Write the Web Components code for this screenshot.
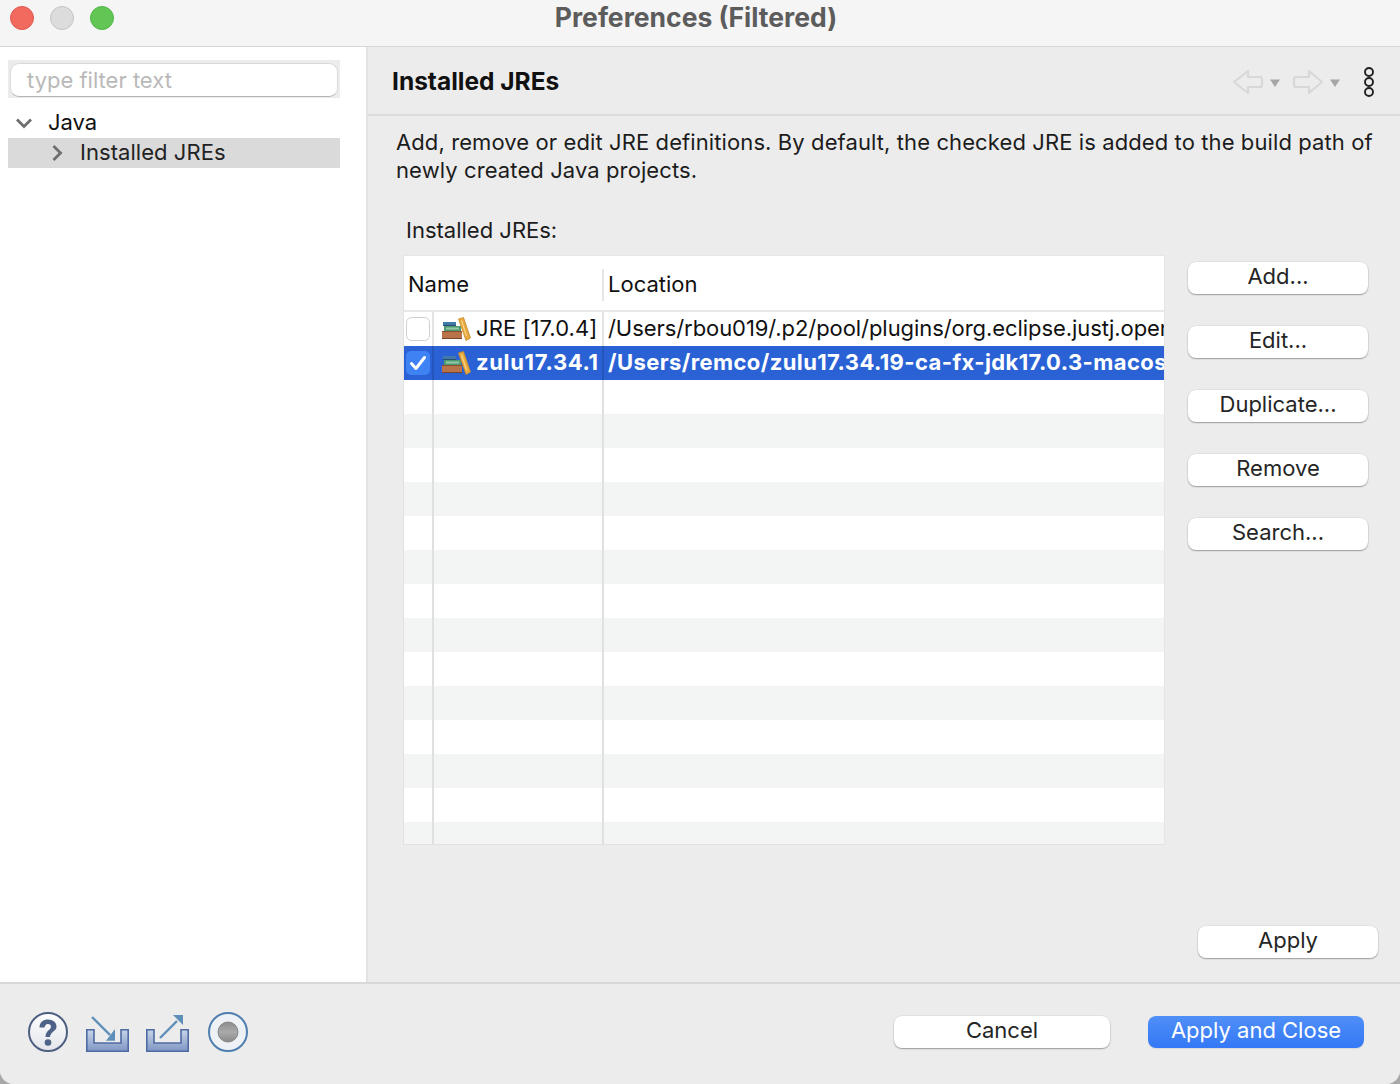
<!DOCTYPE html>
<html lang="en">
<head>
<meta charset="utf-8">
<title>Preferences (Filtered)</title>
<style>
  html, body { margin: 0; padding: 0; background: #a8a8a8; }
  body { font-family: Inter, "Liberation Sans", sans-serif; }
</style>
</head>
<body>
<pref-window>
  <pref-titlebar slot="top">Preferences (Filtered)</pref-titlebar>
  <pref-tree slot="left"></pref-tree>
  <jre-page slot="right"></jre-page>
  <pref-footer slot="bottom"></pref-footer>
</pref-window>

<script>
const FONT = 'Inter, "Liberation Sans", sans-serif';

class PrefWindow extends HTMLElement {
  constructor() {
    super();
    this.attachShadow({ mode: 'open' });
    this.shadowRoot.innerHTML = `
      <style>
        :host { display: block; width: 1400px; height: 1084px; overflow: hidden; }
        .win { height: 1084px; display: flex; flex-direction: column; background: #ececec; border-radius: 0 0 14px 14px; overflow: hidden; }
        .mid { flex: 1; display: flex; min-height: 0; }
        .left { width: 366px; background: #fff; border-right: 2px solid #e2e2e2; }
        .right { flex: 1; min-width: 0; }
      </style>
      <div class="win">
        <slot name="top"></slot>
        <div class="mid">
          <div class="left"><slot name="left"></slot></div>
          <div class="right"><slot name="right"></slot></div>
        </div>
        <slot name="bottom"></slot>
      </div>`;
  }
}

class PrefTitlebar extends HTMLElement {
  constructor() {
    super();
    this.attachShadow({ mode: 'open' });
    this.shadowRoot.innerHTML = `
      <style>
        :host { display: block; }
        .bar { height: 46px; background: #f5f5f5; border-bottom: 1px solid #d6d6d6; position: relative;
          display: flex; align-items: flex-start; justify-content: center; }
        .title { font: 700 26.5px/34px ${FONT}; color: #5c5c5c; margin-left: -8px; }
        .lights { position: absolute; left: 10px; top: 6px; display: flex; gap: 16px; }
        .lights i { display: block; width: 24px; height: 24px; border-radius: 50%; box-sizing: border-box; }
        .r { background: #f2695e; border: 1px solid #dd5a50; }
        .g { background: #dcdcdc; border: 1px solid #c4c4c4; }
        .v { background: #62c655; border: 1px solid #55b34a; }
      </style>
      <div class="bar">
        <div class="lights"><i class="r"></i><i class="g"></i><i class="v"></i></div>
        <div class="title"><slot></slot></div>
      </div>`;
  }
}

class PrefTree extends HTMLElement {
  constructor() {
    super();
    this.attachShadow({ mode: 'open' });
    this.shadowRoot.innerHTML = `
      <style>
        :host { display: block; padding: 13px 26px 0 8px; font: 22px/30px ${FONT}; color: #111; }
        .filter { height: 38px; background: #ececec; padding: 3px 2px; box-sizing: border-box; margin-bottom: 10px; }
        .input { height: 34px; box-sizing: border-box; background: #fff; border-radius: 9px; border: 1px solid #d9d9d9;
          border-bottom: 1px solid #b4b4b4; padding-left: 16px; color: #b9b9b9; font-size: 22px; line-height: 33px; }
        .row { height: 30px; display: flex; align-items: center; white-space: nowrap; }
        .row svg { flex: none; }
        .row span { margin-top: -2px; }
        .sel { background: #dadada; color: #222; }
        .java { padding-left: 7px; }
        .java span { margin-left: 15px; }
        .sel { padding-left: 43px; }
        .sel span { margin-left: 17px; letter-spacing: .05px; }
      </style>
      <div class="filter"><div class="input">type filter text</div></div>
      <div class="row java">
        <svg width="18" height="12" viewBox="0 0 18 12"><path d="M2 2.5 9 9.5 16 2.5" fill="none" stroke="#6e6e6e" stroke-width="2.8"/></svg>
        <span>Java</span>
      </div>
      <div class="row sel">
        <svg width="12" height="18" viewBox="0 0 12 18"><path d="M2.5 2 9.5 9 2.5 16" fill="none" stroke="#6e6e6e" stroke-width="2.8"/></svg>
        <span>Installed JREs</span>
      </div>`;
  }
}

class PushButton extends HTMLElement {
  constructor() {
    super();
    this.attachShadow({ mode: 'open' });
    this.shadowRoot.innerHTML = `
      <style>
        :host { display: block; width: 180px; height: 32px; box-sizing: border-box; background: #fff; border-radius: 8px;
          box-shadow: 0 0 0 0.5px rgba(0,0,0,.07), 0 1px 1.5px rgba(0,0,0,.32);
          font: 22px/29px ${FONT}; color: #252525; text-align: center; }
        :host([primary]) { background: linear-gradient(#4f8ff7, #3478f6); color: #fff; box-shadow: 0 1px 1px rgba(0,0,0,.08); }
        :host([wide]) { width: 216px; }
      </style>
      <slot></slot>`;
  }
}

const BOOKS = `
  <svg width="30" height="26" viewBox="0 0 30 26">
    <rect x="1" y="15" width="20" height="8" fill="#b9734a"/>
    <rect x="1" y="15" width="20" height="1" fill="#8a4f2d"/>
    <rect x="1" y="22" width="20" height="1" fill="#7c4526"/>
    <rect x="3" y="10" width="17" height="5" fill="#4f9a72"/>
    <rect x="5" y="11.5" width="13" height="2" fill="#93c9a5"/>
    <rect x="2" y="6" width="13" height="4" fill="#3f7aa8"/>
    <rect x="2" y="9" width="13" height="1" fill="#2b4c73"/>
    <path d="M17.5 3 22.5 1.5 29.5 22 25 24.5Z" fill="#eaa93f" stroke="#c48a2c" stroke-width=".8"/>
    <path d="M20.5 4.5 25.5 20" stroke="#f7d78b" stroke-width="1.1"/>
  </svg>`;

class JreRow extends HTMLElement {
  constructor() {
    super();
    this.attachShadow({ mode: 'open' });
  }
  connectedCallback() { this.render(); }
  render() {
    const selected = this.hasAttribute('selected');
    const check = selected
      ? `<svg width="24" height="24" viewBox="0 0 24 24"><rect x="0" y="0" width="24" height="24" rx="5" fill="#3f82f4"/><path d="M5.5 12.5 10 17.5 18.5 6.5" fill="none" stroke="#fff" stroke-width="3" stroke-linecap="round" stroke-linejoin="round"/></svg>`
      : `<svg width="24" height="24" viewBox="0 0 24 24"><rect x=".5" y=".5" width="23" height="23" rx="5" fill="#fff" stroke="#cfcfcf"/></svg>`;
    this.shadowRoot.innerHTML = `
      <style>
        :host { display: grid; grid-template-columns: 28px 2px 168px 2px 1fr; height: 34px; background: #fff; color: #111;
          font: 22px/32px ${FONT}; white-space: nowrap; }
        :host([selected]) { background: #2a62d6; color: #fff; font-weight: 700; }
        .chk { display: flex; align-items: center; padding-left: 2px; }
        .sep { background: #e4e4e4; }
        :host([selected]) .sep { background: #2556bb; }
        .name { display: flex; align-items: center; overflow: hidden; padding-left: 7px; }
        .name svg { flex: none; margin-right: 5px; }
        .name span { letter-spacing: .08px; margin-top: -2px; }
        :host([selected]) .name span { letter-spacing: .65px; }
        .loc { overflow: hidden; padding-left: 4px; letter-spacing: -.07px; }
        :host([selected]) .loc { letter-spacing: .4px; }
      </style>
      <div class="chk">${check}</div><div class="sep"></div>
      <div class="name">${BOOKS}<span>${this.getAttribute('name')}</span></div><div class="sep"></div>
      <div class="loc">${this.getAttribute('location')}</div>`;
  }
}

class JreTable extends HTMLElement {
  constructor() {
    super();
    this.attachShadow({ mode: 'open' });
    // 14 empty rows, alternating; the last one is cut off by the table's bottom edge
    const empties = [];
    for (let i = 0; i < 14; i++) empties.push(`<div class="empty ${i % 2 ? 'alt' : ''}"><b></b><s></s><b></b><s></s><b></b></div>`);
    this.shadowRoot.innerHTML = `
      <style>
        :host { display: block; width: 762px; height: 590px; box-sizing: border-box; border: 1px solid #e2e2e2; border-top-color: #e6e6e6;
          border-right-color: #e6e6e6; background: #fff; overflow: hidden; flex: none; }
        .head { height: 54px; display: flex; align-items: center; font: 22px/30px ${FONT}; color: #111; border-bottom: 2px solid #e8e8e8; }
        .head .n { width: 198px; padding-left: 4px; box-sizing: border-box; }
        .head i { width: 2px; height: 32px; background: #e6e6e6; margin-top: 3px; }
        .head .l { padding-left: 4px; }
        .head span { display: block; margin-top: 2px; }
        .empty { height: 34px; display: grid; grid-template-columns: 28px 2px 168px 2px 1fr; background: #fff; }
        .empty.alt { background: #f3f4f4; }
        .empty s { background: #e0e0e0; display: block; }
      </style>
      <div class="head">
        <div class="n"><span>Name</span></div><i></i><div class="l"><span>Location</span></div>
      </div>
      <jre-row name="JRE [17.0.4]" location="/Users/rbou019/.p2/pool/plugins/org.eclipse.justj.open"></jre-row>
      <jre-row selected name="zulu17.34.1" location="/Users/remco/zulu17.34.19-ca-fx-jdk17.0.3-macos"></jre-row>
      ${empties.join('')}`;
  }
}

class JrePage extends HTMLElement {
  constructor() {
    super();
    this.attachShadow({ mode: 'open' });
    this.shadowRoot.innerHTML = `
      <style>
        :host { display: flex; flex-direction: column; height: 100%; box-sizing: border-box; color: #1c1c1c; font: 22px/28px ${FONT}; }
        header { height: 69px; box-sizing: border-box; border-bottom: 2px solid #dcdcdc; display: flex; align-items: center;
          padding: 0 20px 0 24px; }
        h1 { margin: 0; font: 700 24.5px/30px ${FONT}; color: #111; flex: 1; margin-top: 1px; }
        .nav { display: flex; align-items: center; margin-top: 2px; }
        svg { display: block; }
        .desc { margin: 12px 20px 0 28px; letter-spacing: .1px; }
        .lab { margin: 32px 0 11px 38px; }
        .main { display: flex; padding-left: 35px; gap: 23px; }
        .side { display: flex; flex-direction: column; gap: 32px; padding-top: 7px; }
        .apply { margin: auto 22px 24px auto; }
      </style>
      <header>
        <h1>Installed JREs</h1>
        <div class="nav">
          <svg width="148" height="35" viewBox="0 0 148 35">
            <path d="M2 18 16 7V13H28Q30 13 30 15V21Q30 23 28 23H16V29Z" fill="none" stroke="#d8d8d8" stroke-width="2.2" stroke-linejoin="round"/>
            <path d="M38 15.5H48L43 23Z" fill="#a6a6a6"/>
            <path d="M90 18 77 7V13H64Q62 13 62 15V21Q62 23 64 23H77V29Z" fill="none" stroke="#d8d8d8" stroke-width="2.2" stroke-linejoin="round"/>
            <path d="M98 15.5H108L103 23Z" fill="#a6a6a6"/>
            <g fill="none" stroke="#222" stroke-width="1.9"><circle cx="137" cy="8" r="4"/><circle cx="137" cy="18" r="4"/><circle cx="137" cy="28" r="4"/></g>
          </svg>
        </div>
      </header>
      <div class="desc">Add, remove or edit JRE definitions. By default, the checked JRE is added to the build path of newly created Java projects.</div>
      <div class="lab">Installed JREs:</div>
      <div class="main">
        <jre-table></jre-table>
        <div class="side">
          <push-button>Add...</push-button>
          <push-button>Edit...</push-button>
          <push-button>Duplicate...</push-button>
          <push-button>Remove</push-button>
          <push-button>Search...</push-button>
        </div>
      </div>
      <push-button class="apply">Apply</push-button>`;
  }
}

class PrefFooter extends HTMLElement {
  constructor() {
    super();
    this.attachShadow({ mode: 'open' });
    this.shadowRoot.innerHTML = `
      <style>
        :host { display: flex; align-items: flex-start; height: 102px; box-sizing: border-box; border-top: 2px solid #d8d8d8;
          background: #ececec; padding: 28px 36px 0 28px; }
        .icons { display: flex; flex: 1; }
        .icons svg { display: block; flex: none; }
        .i2 { margin-left: 18px; }
        .i3 { margin-left: 17px; }
        .i4 { margin-left: 19px; }
        .gap { width: 38px; flex: none; }
        .btns { display: flex; padding-top: 4px; }
      </style>
      <div class="icons">
        <svg width="40" height="40" viewBox="0 0 40 40">
          <defs>
            <linearGradient id="rim" x1="0" y1="0" x2="0" y2="1"><stop offset="0" stop-color="#fff"/><stop offset="1" stop-color="#e3e5ea"/></linearGradient>
            <linearGradient id="tray" x1="0" y1="0" x2="0" y2="1"><stop offset="0" stop-color="#c9d4e8"/><stop offset="1" stop-color="#7f97c4"/></linearGradient>
            <linearGradient id="dot" x1="0" y1="0" x2="0" y2="1"><stop offset="0" stop-color="#8c8c8c"/><stop offset=".5" stop-color="#aaa"/><stop offset="1" stop-color="#8a8a8a"/></linearGradient>
          </defs>
          <circle cx="20" cy="20" r="19" fill="url(#rim)" stroke="#4f5f80" stroke-width="2"/>
          <path d="M11.5 15.5C11.5 10 15.5 7.5 20 7.5 25 7.5 28.5 10.5 28.5 14.5 28.5 19.5 22.5 19.5 22 25H17.5C17.5 18.5 23 18 23 14.8 23 13 21.8 12 20 12 18 12 16.8 13.3 16.6 15.5Z" fill="#4f6287"/>
          <circle cx="20" cy="30.5" r="3.3" fill="#4f6287"/>
        </svg>
        <svg class="i2" width="43" height="40" viewBox="0 0 43 40">
          <path d="M.8 17.8H8V31H35V17.8H42.2V39.2H.8Z" fill="url(#tray)" stroke="#4f6ba3" stroke-width="1.6"/>
          <path d="M6 5 24 23" stroke="#5f8fb8" stroke-width="2.4"/>
          <path d="M29 28.7H20L29 17Z" fill="#5f8fb8"/>
        </svg>
        <svg class="i3" width="43" height="40" viewBox="0 0 43 40">
          <path d="M.8 17.8H8V31H35V17.8H42.2V39.2H.8Z" fill="url(#tray)" stroke="#4f6ba3" stroke-width="1.6"/>
          <path d="M14 26 31 9" stroke="#5f8fb8" stroke-width="2.4"/>
          <path d="M37 3H27L37 13Z" fill="#5f8fb8"/>
        </svg>
        <svg class="i4" width="40" height="40" viewBox="0 0 40 40">
          <circle cx="20" cy="20" r="19" fill="#eef1f6" stroke="#4f7fb0" stroke-width="2"/>
          <circle cx="20" cy="20" r="10" fill="url(#dot)" stroke="#858585" stroke-width="1"/>
        </svg>
      </div>
      <div class="btns">
        <push-button wide>Cancel</push-button>
        <div class="gap"></div>
        <push-button wide primary>Apply and Close</push-button>
      </div>`;
  }
}

customElements.define('pref-window', PrefWindow);
customElements.define('pref-titlebar', PrefTitlebar);
customElements.define('pref-tree', PrefTree);
customElements.define('push-button', PushButton);
customElements.define('jre-row', JreRow);
customElements.define('jre-table', JreTable);
customElements.define('jre-page', JrePage);
customElements.define('pref-footer', PrefFooter);
</script>
</body>
</html>
